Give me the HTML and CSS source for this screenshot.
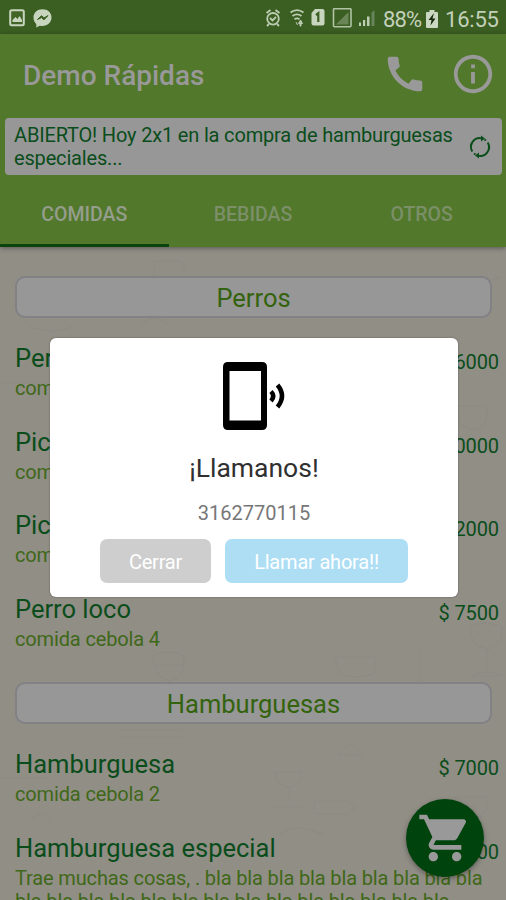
FILE: index.html
```html
<!DOCTYPE html>
<html lang="es">
<head>
<meta charset="utf-8">
<title>Demo Rápidas</title>
<link rel="stylesheet" href="styles.css">
</head>
<body>
<div class="app">
  <div class="status">
    <svg class="ico-left" width="46" height="22" viewBox="0 0 46 22">
      <rect x="2.200" y="2.200" width="13.600" height="15" rx="1.500" fill="#426527" stroke="#c7d5be" stroke-width="2"/>
      <path d="M4.500 14V12l3-3 2 2 2-3 2.500 4v2z" fill="#c7d5be"/>
      <path d="M34.500 1.200c-5.200 0-9 3.500-9 8.300 0 2.800 1.200 4.900 2.800 6.500v3.600l3.400-1.900c6.800 1.300 11.800-2.600 11.800-8.200 0-4.800-3.800-8.300-9-8.300z" fill="#c7d5be"/>
      <path d="M29.500 11.500l4-3.800 2.500 2.200 4-2.300-4 4.200-2.500-2.200z" fill="#3b5e22" stroke="#3b5e22"/>
    </svg>
    <svg class="ico-right" width="112" height="22" viewBox="0 0 112 22">
      <g fill="none" stroke="#bccdb1" stroke-width="1.800">
        <circle cx="8" cy="10.800" r="5.800"/><path d="M1.500 5l4-3M14.500 5l-4-3M4 16l-2 2M12 16l2 2M5 10l2.500 2.500L11 9"/>
        <path d="M25.500 4.500c4-3 9-3 13 0M27.500 8c3-2.200 6-2.200 9 0M29.500 11.200c2-1.200 3-1.200 5 0"/>
      </g>
      <path d="M31 14l1.500 3M35.500 12l-2 3.500h4zM35 14h1v4h-1z" fill="#bccdb1" stroke="#bccdb1"/>
      <path d="M50 1h7.500q2 0 2 2v12.500q0 2-2 2h-9q-2 0-2-2V5z" fill="#c7d5be"/>
      <path d="M51 7l2.300-1.700V14" fill="none" stroke="#3b5e22" stroke-width="2.200"/>
      <rect x="68.500" y="0.700" width="17.500" height="18" rx="1" fill="none" stroke="#b0c3a5" stroke-width="1.600"/>
      <path d="M71 16.500L83.500 4v12.500z" fill="#6a8657"/>
      <path d="M94 14.500h2V18h-2zM98 12h2.200v6H98zM102 8.500h2.500V18H102z" fill="#bccdb1"/><path d="M106.500 4.500L109.500 2v16h-3z" fill="#67845a"/>
    </svg>
    <span class="pct">88%</span>
    <svg class="battery" width="12" height="18" viewBox="0 0 12 18"><path d="M3.500 2V0h5v2H11q1 0 1 1v14q0 1-1 1H1q-1 0-1-1V3q0-1 1-1z" fill="#cad7c2"/><path d="M8 3L2.500 10h3L4.500 15.500 9.500 8.500h-3z" fill="#172b0d"/></svg>
    <span class="time">16:55</span>
  </div>
  <header class="header">
    <div class="titlebar">
      <h1 class="title">Demo Rápidas</h1>
      <svg class="phone" width="46" height="46" viewBox="0 0 24 24"><path fill="#999" d="M20.010 15.380c-1.230 0-2.420-.2-3.530-.560-.350-.120-.740-.030-1.010.240l-1.570 1.970c-2.830-1.350-5.480-3.900-6.890-6.830l1.950-1.660c.270-.280.350-.670.240-1.020-.370-1.110-.560-2.300-.560-3.530 0-.540-.450-.990-.990-.990H4.190C3.650 3 3 3.240 3 3.990 3 13.280 10.730 21 20.010 21c.710 0 .990-.630.990-1.180v-3.450c0-.540-.450-.990-.990-.990z"/></svg>
      <svg class="info" width="46" height="46" viewBox="0 0 24 24"><path fill="#999" d="M11 17h2v-6h-2v6zm1-15C6.480 2 2 6.480 2 12s4.480 10 10 10 10-4.480 10-10S17.520 2 12 2zm0 18c-4.410 0-8-3.590-8-8s3.590-8 8-8 8 3.590 8 8-3.590 8-8 8zM11 9h2V7h-2v2z"/></svg>
    </div>
    <div class="notice">
      <p class="notice-text">ABIERTO! Hoy 2x1 en la compra de hamburguesas especiales...</p>
      <svg width="24" height="24" viewBox="0 0 24 24"><g fill="none" stroke="#0a4d1b" stroke-width="2"><path d="M4.300 16.500A8.800 8.800 0 0 1 14 3.400M19.700 7.500A8.800 8.800 0 0 1 10 20.600M16.500 4.500l1.500 1M7.500 19.500l-1.500-1"/></g><path d="M13 .4L17 3.600l-4 3zM11 17.400L7 20.500l4 3z" fill="#0a4d1b"/></svg>
    </div>
    <nav class="tabs">
      <span class="tab active">COMIDAS</span>
      <span class="tab">BEBIDAS</span>
      <span class="tab">OTROS</span>
    </nav>
  </header>
  <main class="menu">
    <svg class="doodles" width="506" height="653" viewBox="0 0 506 653" fill="none" stroke="#8c8a82" stroke-width="1">
      <rect x="154" y="14" width="30" height="22" rx="4"/><path d="M0 136h46M30 80q28 8 42 0M456 159h30q4 22-13 24-17-2-17-24zM140 78q14-14 28 0M500 30q-18 4-22 20"/>
      <path d="M153 409q15-8 31 0 2 22-14 25-16-2-17-25zM156 418h27M470 380q15-8 32 0 0 20-15 22-17-2-17-22zM487 402v20M472 429q15-8 30 0zM420 400v30q-5 6-5 12v10M335 410h40v16q-20 8-36 0zM0 531h48M120 483h60M122 490h60M275 525h26q2 12-12 16-14-4-14-16zM289 541v13M274 560h28M314 554h34l8 6-8 7h-34zM30 574q15-14 20 0M338 508l12-12 12 12zM455 550h32v12q-5 10-16 10-16-2-16-22M280 588q12-14 44 0"/>
    </svg>
    <h2 class="category">Perros</h2>
    <div class="item"><div class="info-col"><div class="name">Perro</div><div class="desc">comida</div></div><div class="price">$ 6000</div></div>
    <div class="item"><div class="info-col"><div class="name">Picada</div><div class="desc">comida</div></div><div class="price">$ 10000</div></div>
    <div class="item"><div class="info-col"><div class="name">Picada</div><div class="desc">comida</div></div><div class="price">$ 12000</div></div>
    <div class="item"><div class="info-col"><div class="name">Perro loco</div><div class="desc">comida cebola 4</div></div><div class="price">$ 7500</div></div>
    <h2 class="category second">Hamburguesas</h2>
    <div class="item"><div class="info-col"><div class="name">Hamburguesa</div><div class="desc">comida cebola 2</div></div><div class="price">$ 7000</div></div>
    <div class="item"><div class="info-col"><div class="name">Hamburguesa especial</div><div class="desc">Trae muchas cosas, . bla bla bla bla bla bla bla bla bla<br>bla bla bla bla bla bla bla bla bla bla bla bla bla bla</div></div><div class="price">$ 9000</div></div>
  </main>
  <div class="fab"><svg width="56" height="56" viewBox="0 0 24 24"><path fill="#999" d="M7 18c-1.100 0-1.990.9-1.990 2S5.900 22 7 22s2-.9 2-2-.9-2-2-2zM1 2v2h2l3.600 7.590-1.350 2.450c-.160.280-.250.610-.250.960 0 1.100.9 2 2 2h12v-2H7.420c-.140 0-.250-.110-.250-.250l.030-.120.900-1.630h7.450c.750 0 1.410-.410 1.750-1.030l3.580-6.490c.080-.140.120-.310.120-.480 0-.550-.450-1-1-1H5.210l-.940-2H1zm16 16c-1.100 0-1.990.9-1.990 2s.890 2 1.990 2 2-.9 2-2-.9-2-2-2z"/></svg></div>
  <div class="dialog">
    <svg class="device" width="66" height="70" viewBox="0 0 66 70">
      <path fill="#000" fill-rule="evenodd" d="M6 1h34q5 0 5 5v58q0 5-5 5H6q-5 0-5-5V6q0-5 5-5zM7.500 10v49.500h31.500V10z"/>
      <g fill="none" stroke="#000"><path d="M49 30.500q4.500 4.500 0 9.500" stroke-width="4.500"/><path d="M55.500 24q9 11 0 22" stroke-width="4.500"/></g>
    </svg>
    <h3 class="dialog-title">¡Llamanos!</h3>
    <p class="number">3162770115</p>
    <div class="actions"><button class="btn close">Cerrar</button><button class="btn call">Llamar ahora!!</button></div>
  </div>
</div>
</body>
</html>
```

FILE: styles.css
```css
* { box-sizing: border-box; }
body, h1, h2, h3, p { margin: 0; font-weight: 400; }
body { font-family: Roboto, "Liberation Sans", sans-serif; }
svg { display: block; flex: none; }

.app { position: relative; width: 506px; height: 900px; overflow: hidden; background: #918e86; display: flex; flex-direction: column; }

.status { height: 34px; flex: none; background: #3b5e22; color: #c3d1ba; display: flex; align-items: center; padding: 4px 9px 0 8px; font-size: 22px; white-space: nowrap; }
.ico-right { margin-left: auto; margin-right: 6px; }
.pct { width: 38px; letter-spacing: -0.9px; }
.battery { margin: 0 7px 0 5px; }
.time { width: 52px; letter-spacing: -0.2px; }

.header { position: relative; z-index: 1; flex: none; height: 213px; background: #52782b; box-shadow: 0 1px 5px rgba(0, 0, 0, 0.4); }
.titlebar { height: 84px; display: flex; align-items: center; padding: 0 10px 5px 23px; }
.title { flex: 1; padding-top: 4px; color: #999; font-size: 28px; font-weight: 500; }
.phone { margin-right: 22px; }

.notice { height: 57px; margin: 0 4px 0 5px; padding: 0 10px 0 9px; border-radius: 4px; background: #979797; display: flex; align-items: center; justify-content: space-between; }
.notice-text { width: 448px; padding-top: 1px; color: #0a4d1b; font-size: 20px; line-height: 23px; letter-spacing: -0.17px; }
.tabs { height: 72px; display: grid; grid-template-columns: repeat(3, 1fr); }
.tab { display: flex; align-items: center; justify-content: center; padding-top: 10px; color: #7b8f68; font-size: 19.5px; font-weight: 500; border-bottom: 3px solid transparent; }
.tab.active { color: #959d8d; border-color: #0a430e; }

.menu { position: relative; flex: 1; padding: 29px 7px 0 15px; }
.doodles { position: absolute; left: 0; top: 0; }
.category { position: relative; height: 42px; margin: 0 7px 24px 0; border: 2px solid #818186; border-radius: 10px; background: #979797; color: #34630e; font-size: 25.5px; line-height: 41px; text-align: center; }
.category.second { margin-top: 6px; }
.item { position: relative; height: 83.5px; display: flex; justify-content: space-between; white-space: nowrap; }
.info-col { width: 0; }
.name { color: #0a4d1b; font-size: 25.5px; line-height: 32px; }
.desc { margin-top: 3px; color: #3f6818; font-size: 20px; line-height: 23px; letter-spacing: -0.14px; }
.price { margin-top: 8px; color: #0a4d1b; font-size: 20px; line-height: 24px; letter-spacing: -0.1px; }

.fab { position: absolute; left: 406px; top: 799px; width: 78px; height: 78px; border-radius: 50%; background: #00430c; box-shadow: 0 2px 5px rgba(0, 0, 0, 0.35); display: flex; align-items: center; justify-content: center; }

.dialog { position: absolute; z-index: 2; left: 50px; top: 338px; width: 408px; height: 259px; border-radius: 6px; background: #fff; box-shadow: 0 0 2px rgba(0, 0, 0, 0.4); display: flex; flex-direction: column; align-items: center; }
.device { margin: 23px 0 0 2px; }
.dialog-title { margin-top: 21px; color: #303030; font-size: 26.5px; line-height: 32px; }
.number { margin-top: 17px; color: #777; font-size: 20px; line-height: 24px; }
.actions { display: flex; gap: 14px; margin-top: 14px; }
.btn { height: 44px; border: 0; border-radius: 7px; padding: 1px 0 0; color: #fff; font-family: inherit; font-size: 20px; letter-spacing: -0.2px; }
.close { width: 111px; background: #cecece; }
.call { width: 183px; background: #aedef4; }
```
